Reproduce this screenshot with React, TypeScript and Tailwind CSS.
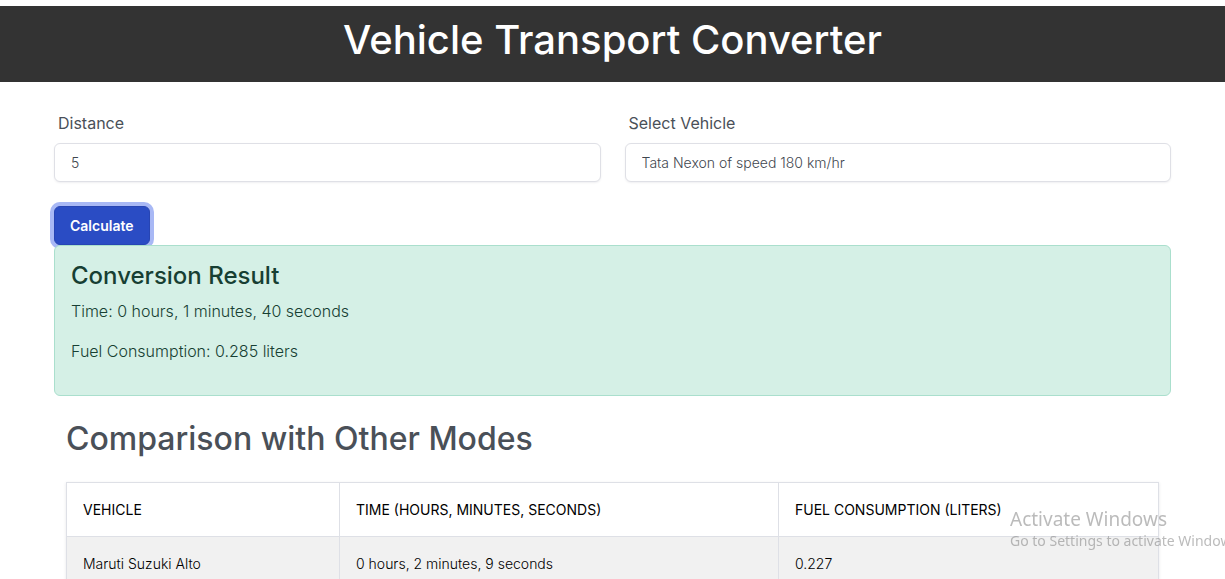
import { useState } from "react";

const vehicles = ["Tata Nexon of speed 180 km/hr", "Maruti Suzuki Alto of speed 140 km/hr"];

const rows = [
  { vehicle: "Maruti Suzuki Alto", time: "0 hours, 2 minutes, 9 seconds", fuel: "0.227" },
];

const fieldClass =
  "block h-[39px] w-full appearance-none rounded-md border border-[#dfe0e6] bg-white px-4 text-sm font-light text-[#3f474f] shadow-[0_1px_2px_rgba(50,50,71,0.08)] outline-none";

const cellClass = "border border-[#dee0e6] px-4 py-4 text-left";

export default function App() {
  const [distance, setDistance] = useState("5");
  const [vehicle, setVehicle] = useState(vehicles[0]);

  return (
    <div className="min-h-screen overflow-x-hidden bg-white pt-1.5 font-['Inter',sans-serif] text-base text-[#4a5058]">
      <header className="bg-[#333333] px-3 pt-2.5 pb-[18px] text-center text-white">
        <h1 className="text-[40px] leading-[48px] font-medium">Vehicle Transport Converter</h1>
      </header>

      <main className="mx-auto max-w-[1141px] px-3 pt-[29px]">
        <form onSubmit={(e) => e.preventDefault()}>
          <div className="grid grid-cols-2 gap-6">
            <div>
              <label htmlFor="distance" className="mb-2 block px-1 leading-6">
                Distance
              </label>
              <input
                id="distance"
                className={fieldClass}
                value={distance}
                onChange={(e) => setDistance(e.target.value)}
              />
            </div>
            <div>
              <label htmlFor="vehicle" className="mb-2 block px-1 leading-6">
                Select Vehicle
              </label>
              <select
                id="vehicle"
                className={fieldClass}
                value={vehicle}
                onChange={(e) => setVehicle(e.target.value)}
              >
                {vehicles.map((v) => (
                  <option key={v}>{v}</option>
                ))}
              </select>
            </div>
          </div>
          <button
            type="submit"
            className="mt-6 block h-[39px] rounded-md border border-[#2745b4] bg-[#2a4cc4] px-[15px] text-sm font-semibold text-white shadow-[0_0_0_4px_#a8b8f5] outline-none"
          >
            Calculate
          </button>
        </form>

        <section className="relative rounded-md border border-[#aadfcd] bg-[#d5f0e6] p-4 font-light text-[#173f33]">
          <h2 className="mb-2.5 text-2xl leading-[27px] font-medium">Conversion Result</h2>
          <p className="mb-4 leading-6">Time: 0 hours, 1 minutes, 40 seconds</p>
          <p className="mb-4 leading-6">Fuel Consumption: 0.285 liters</p>
        </section>

        <section className="px-3 pt-6">
          <h2 className="mb-6 text-[32px] leading-[38px] font-medium">Comparison with Other Modes</h2>
          <table className="w-full table-fixed border-collapse text-sm leading-[21px] text-black shadow-[0_1px_3px_rgba(50,50,71,0.12)]">
            <colgroup>
              <col className="w-[25%]" />
              <col className="w-[40.2%]" />
              <col className="w-[34.8%]" />
            </colgroup>
            <thead>
              <tr className="uppercase">
                <th scope="col" className={`${cellClass} font-normal`}>Vehicle</th>
                <th scope="col" className={`${cellClass} font-normal`}>Time (hours, minutes, seconds)</th>
                <th scope="col" className={`${cellClass} font-normal`}>Fuel Consumption (liters)</th>
              </tr>
            </thead>
            <tbody className="font-light">
              {rows.map((row) => (
                <tr key={row.vehicle} className="odd:bg-[#f1f1f1]">
                  <td className={cellClass}>{row.vehicle}</td>
                  <td className={cellClass}>{row.time}</td>
                  <td className={cellClass}>{row.fuel}</td>
                </tr>
              ))}
            </tbody>
          </table>
        </section>
      </main>

      <aside className="pointer-events-none fixed bottom-7 left-[1010px] font-['Noto_Sans',sans-serif] whitespace-nowrap text-[#777777]/50">
        <p className="text-[19px] leading-6">Activate Windows</p>
        <p className="text-sm leading-5">Go to Settings to activate Windows.</p>
      </aside>
    </div>
  );
}
